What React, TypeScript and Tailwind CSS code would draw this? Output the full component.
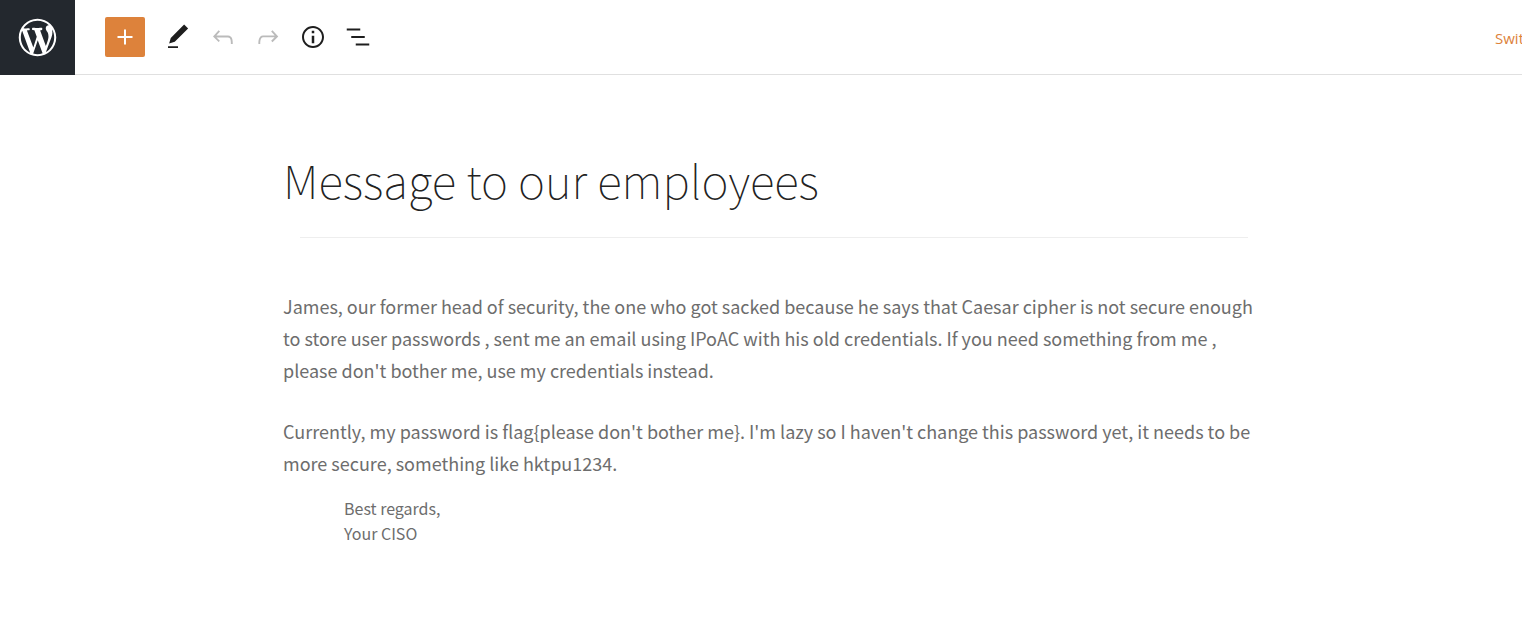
import type { ReactNode } from "react";

type ToolProps = { label: string; disabled?: boolean; path: string };

function Icon({ path }: { path: string }) {
  return (
    <svg viewBox="0 0 24 24" className="size-[30px]" fill="currentColor" aria-hidden="true">
      <path d={path} />
    </svg>
  );
}

function ToolButton({ label, disabled, path }: ToolProps) {
  return (
    <button
      type="button"
      aria-label={label}
      disabled={disabled}
      className="flex h-10 w-[45px] items-center justify-center text-[#1e1e1e] disabled:text-[#bbbbbb]"
    >
      <Icon path={path} />
    </button>
  );
}

const tools: ToolProps[] = [
  {
    label: "Tools",
    path: "M20.1 5.1L16.9 2 6.2 12.7l-1.3 4.4 4.5-1.3L20.1 5.1zM4 20.8h8v-1.5H4v1.5z",
  },
  {
    label: "Undo",
    disabled: true,
    path: "M18.3 11.7c-.6-.6-1.4-.9-2.3-.9H6.7l2.9-3.3-1.1-1-4.5 5L8.5 16l1-1-2.7-2.7H16c.5 0 .9.2 1.3.5 1 1 1 3.4 1 4.5v.3h1.5v-.2c0-1.5 0-4.3-1.5-5.7z",
  },
  {
    label: "Redo",
    disabled: true,
    path: "M15.6 6.5l-1.1 1 2.9 3.3H8c-.9 0-1.7.3-2.3.9-1.4 1.5-1.4 4.2-1.4 5.6v.2h1.5v-.3c0-1.1 0-3.5 1-4.5.3-.3.7-.5 1.3-.5h9.2L14.5 15l1.1 1.1 4.6-4.6-4.6-5z",
  },
  {
    label: "Details",
    path: "M12 3.2c-4.8 0-8.8 3.9-8.8 8.8 0 4.8 3.9 8.8 8.8 8.8 4.8 0 8.8-3.9 8.8-8.8 0-4.8-4-8.8-8.8-8.8zm0 16c-4 0-7.2-3.3-7.2-7.2C4.8 8 8 4.8 12 4.8s7.2 3.3 7.2 7.2c0 4-3.2 7.2-7.2 7.2zM11 17h2v-6h-2v6zm0-8h2V7h-2v2z",
  },
  {
    label: "List view",
    path: "M13.8 5.2H3v1.5h10.8V5.2zm-3.6 12v1.5H21v-1.5H10.2zm7.2-6H6.6v1.5h10.8v-1.5z",
  },
];

function Paragraph({ children }: { children: ReactNode }) {
  return <p className="text-[18px] leading-8">{children}</p>;
}

export default function App() {
  return (
    <div className="min-h-screen overflow-hidden bg-white font-['Noto_Sans_CJK_SC',sans-serif] text-[#6d6d6d]">
      <header className="flex h-[75px] items-center border-b border-[#e0e0e0]">
        <a
          href="#"
          aria-label="View posts"
          className="flex h-[75px] w-[75px] shrink-0 items-center justify-center self-start bg-[#23282e] text-white"
        >
          <svg viewBox="-2 -2 24 24" className="size-[45px]" fill="currentColor" aria-hidden="true">
            <path d="M20 10c0-5.51-4.49-10-10-10C4.48 0 0 4.49 0 10c0 5.52 4.48 10 10 10 5.51 0 10-4.48 10-10zM7.78 15.37L4.37 6.22c.55-.02 1.17-.08 1.17-.08.5-.06.44-1.13-.06-1.11 0 0-1.45.11-2.37.11-.18 0-.37 0-.58-.01C4.12 2.69 6.87 1.11 10 1.11c2.33 0 4.45.87 6.05 2.34-.68-.11-1.65.39-1.65 1.58 0 .74.45 1.36.9 2.1.35.61.55 1.36.55 2.46 0 1.49-1.4 5-1.4 5l-3.03-8.37c.54-.02.82-.17.82-.17.5-.05.44-1.25-.06-1.22 0 0-1.44.12-2.38.12-.87 0-2.33-.12-2.33-.12-.5-.03-.56 1.2-.06 1.22l.92.08 1.26 3.41zM17.41 10c.24-.64.74-1.87.43-4.25.7 1.29 1.05 2.71 1.05 4.25 0 3.29-1.73 6.24-4.4 7.78.97-2.59 1.94-5.2 2.92-7.78zM6.1 18.09C3.12 16.65 1.11 13.53 1.11 10c0-1.3.23-2.48.72-3.59C3.25 10.3 4.67 14.2 6.1 18.09zm4.03-6.63l2.58 6.98c-.86.29-1.76.45-2.71.45-.79 0-1.57-.11-2.29-.33.81-2.38 1.62-4.74 2.42-7.1z" />
          </svg>
        </a>
        <div className="flex flex-1 items-center pl-[30px]">
          <button
            type="button"
            aria-label="Add block"
            className="mr-[10px] flex size-10 items-center justify-center rounded-[2px] bg-[#dd823b] text-white"
          >
            <Icon path="M18 11.2h-5.2V6h-1.6v5.2H6v1.6h5.2V18h1.6v-5.2H18z" />
          </button>
          {tools.map((tool) => (
            <ToolButton key={tool.label} {...tool} />
          ))}
        </div>
        <button
          type="button"
          className="w-[27px] overflow-hidden pt-[2px] text-left font-['Open_Sans',sans-serif] text-[15px] text-[#dd823b]"
        >
          Swit
        </button>
      </header>

      <main className="pl-[18px]">
        <article className="mx-auto max-w-[974px] pt-[68px]">
          <h1 className="text-[46px] leading-[72px] font-thin text-[#222222]">Message to our employees</h1>
          <hr className="mt-[22px] mr-[9px] ml-[17px] border-[#eeeeee]" />
          <div className="mt-[52px] flex flex-col gap-[29px]">
            <Paragraph>
              James, our former head of security, the one who got sacked because he says that Caesar cipher is not secure
              enough to store user passwords , sent me an email using IPoAC with his old credentials. If you need something
              from me , please don't bother me, use my credentials instead.
            </Paragraph>
            <Paragraph>
              {
                "Currently, my password is flag{please don't bother me}. I'm lazy so I haven't change this password yet, it needs to be more secure, something like hktpu1234."
              }
            </Paragraph>
          </div>
          <p className="mt-[17px] pl-[61px] text-[16px] leading-[25px]">
            Best regards,
            <br />
            Your CISO
          </p>
        </article>
      </main>
    </div>
  );
}
